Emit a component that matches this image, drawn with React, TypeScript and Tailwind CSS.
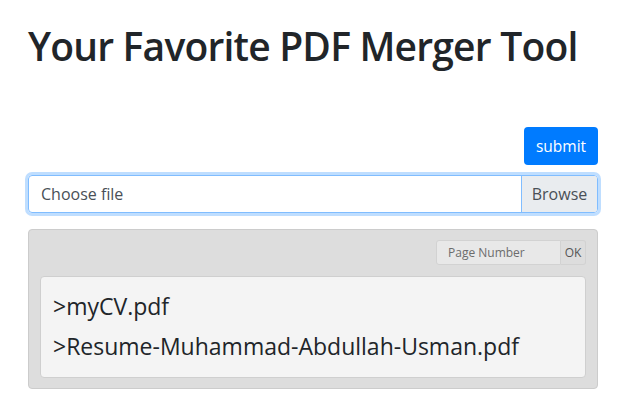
import React from "react";

export default function App() {
  return (
    <div
      className="min-h-[420px] w-full bg-white text-[#212529]"
      style={{ fontFamily: '"Open Sans", "Noto Sans", sans-serif' }}
    >
      <div className="ml-[28px] w-[570px] pt-[22px]">
        <h1 className="m-0 text-[39px] font-semibold leading-[48px] tracking-[-0.8px] whitespace-nowrap">
          Your Favorite PDF Merger Tool
        </h1>
        <div className="mt-[57px] flex justify-end">
          <button className="h-[38px] w-[74px] rounded-[4px] bg-[#007bff] text-[15.5px] leading-[24px] text-white">
            submit
          </button>
        </div>
        <div className="mt-[10px] flex h-[38px] rounded-[4px] border border-[#80bdff] shadow-[0_0_0_3px_rgba(0,123,255,0.25)]">
          <div className="flex flex-1 items-center px-[12px] text-[16px] text-[#495057]">
            Choose file
          </div>
          <div className="flex w-[76px] items-center justify-center rounded-r-[3px] border-l border-[#80bdff] bg-[#e9ecef] text-[16px] text-[#495057]">
            Browse
          </div>
        </div>
        <div className="mt-[16px] rounded-[4px] border border-[#cccccc] bg-[#dddddd] px-[11px] pt-[10px] pb-[10px]">
          <div className="flex justify-end">
            <div className="flex h-[25px] text-[12px]">
              <div className="flex w-[125px] items-center rounded-l-[3px] border border-[#d2d2d2] bg-[#e8e8e8] px-[11px] text-[#6c6c6c]">
                Page Number
              </div>
              <div className="flex w-[25px] items-center justify-center rounded-r-[3px] border border-l-0 border-[#d2d2d2] bg-[#dddddd] text-[#555555]">
                OK
              </div>
            </div>
          </div>
          <div className="mt-[11px] rounded-[4px] border border-[#cfcfcf] bg-[#f4f4f4] px-[12px] pt-[9px] pb-[11px] text-[23px] leading-[40px] text-[#212529]">
            <div>&gt;myCV.pdf</div>
            <div>&gt;Resume-Muhammad-Abdullah-Usman.pdf</div>
          </div>
        </div>
      </div>
    </div>
  );
}
